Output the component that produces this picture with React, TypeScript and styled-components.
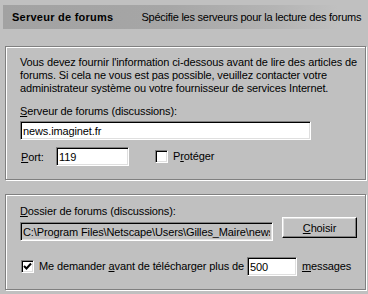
import { createGlobalStyle, styled } from 'styled-components'

const GlobalStyle = createGlobalStyle`
  html, body {
    margin: 0;
    padding: 0;
    background: #c0c0c0;
  }
  body {
    font-family: "Liberation Sans", Arial, sans-serif;
    font-size: 11px;
    letter-spacing: -0.12px;
    color: #000;
  }
`

export default function App() {
  return (
    <Page>
      <GlobalStyle />
      <Header>
        <HeaderTitle>Serveur de forums</HeaderTitle>
        <HeaderText>Spécifie les serveurs pour la lecture des forums</HeaderText>
      </Header>

      <Panel $height={134} $top={17} $padTop={9}>
        <Intro>
          Vous devez fournir l'information ci-dessous avant de lire des articles de
          forums. Si cela ne vous est pas possible, veuillez contacter votre
          administrateur système ou votre fournisseur de services Internet.
        </Intro>
        <FieldLabel $top={10}>
          <u>S</u>erveur de forums (discussions):
        </FieldLabel>
        <TextInput $width={291} defaultValue="news.imaginet.fr" />
        <Row $top={7}>
          <InlineLabel $width={36}>
            <u>P</u>ort:
          </InlineLabel>
          <TextInput $width={73} $top={0} defaultValue="119" />
          <CheckBox $left={26} />
          <CheckText>
            P<u>r</u>otéger
          </CheckText>
        </Row>
      </Panel>

      <Panel $height={96} $top={14} $padTop={10}>
        <FolderRow>
          <FolderField>
            <FieldLabel $top={0}>
              <u>D</u>ossier de forums (discussions):
            </FieldLabel>
            <TextInput
              $width={253}
              $top={4}
              $readOnly
              readOnly
              value="C:\Program Files\Netscape\Users\Gilles_Maire\news"
            />
          </FolderField>
          <Button>
            <u>C</u>hoisir
          </Button>
        </FolderRow>
        <Row $top={16}>
          <CheckBox $left={1}>
            <svg width="9" height="9" viewBox="0 0 9 9">
              <path d="M1 4 L3.5 6.5 L8 1.5" fill="none" stroke="#000" strokeWidth="2" />
            </svg>
          </CheckBox>
          <CheckText>
            Me demander <u>a</u>vant de télécharger plus de
          </CheckText>
          <TextInput $width={50} $top={0} $left={3} defaultValue="500" />
          <CheckText>
            <u>m</u>essages
          </CheckText>
        </Row>
      </Panel>
    </Page>
  )
}

const Page = styled.div`
  width: 368px;
  height: 294px;
  box-sizing: border-box;
  padding: 5px 1px 0 3px;
  overflow: hidden;
`

const Header = styled.div`
  display: flex;
  align-items: center;
  gap: 28px;
  height: 24px;
  padding-left: 9px;
  white-space: nowrap;
  background: linear-gradient(to right, #a2a2a2 0%, #a6a6a6 45%, #b4b4b4 75%, #c0c0c0 92%);
`

const HeaderTitle = styled.span`
  font-weight: 700;
  letter-spacing: 0.25px;
`

const HeaderText = styled.span`
  font-weight: 400;
  letter-spacing: -0.25px;
`

const Panel = styled.div<{ $height: number; $top: number; $padTop: number }>`
  box-sizing: border-box;
  height: ${(p) => p.$height}px;
  margin: ${(p) => p.$top}px 1px 0 2px;
  padding: ${(p) => p.$padTop}px 0 0 14px;
  border: 1px solid #808080;
  box-shadow: inset 1px 1px 0 #fff, 1px 1px 0 #fff;
`

const Intro = styled.p`
  margin: 0;
  line-height: 13px;
  width: 340px;
`

const FieldLabel = styled.div<{ $top: number }>`
  margin-top: ${(p) => p.$top}px;
  line-height: 13px;
`

const TextInput = styled.input<{ $width: number; $top?: number; $left?: number; $readOnly?: boolean }>`
  display: block;
  box-sizing: border-box;
  width: ${(p) => p.$width}px;
  height: 19px;
  margin: ${(p) => p.$top ?? 3}px 0 0 ${(p) => p.$left ?? 0}px;
  padding: 0 2px;
  font: inherit;
  letter-spacing: inherit;
  color: #000;
  background: ${(p) => (p.$readOnly ? '#c0c0c0' : '#fff')};
  border: 1px solid;
  border-color: #808080 #fff #fff #808080;
  box-shadow: inset 1px 1px 0 #000, inset -1px -1px 0 #dfdfdf;
  outline: none;
`

const Row = styled.div<{ $top: number }>`
  display: flex;
  align-items: center;
  margin-top: ${(p) => p.$top}px;
`

const InlineLabel = styled.span<{ $width: number }>`
  width: ${(p) => p.$width}px;
  padding-left: 1px;
  box-sizing: border-box;
`

const CheckBox = styled.span<{ $left: number }>`
  display: flex;
  align-items: center;
  justify-content: center;
  box-sizing: border-box;
  width: 13px;
  height: 13px;
  margin-left: ${(p) => p.$left}px;
  background: #fff;
  border: 1px solid;
  border-color: #808080 #fff #fff #808080;
  box-shadow: inset 1px 1px 0 #000, inset -1px -1px 0 #dfdfdf;
`

const CheckText = styled.span`
  margin-left: 5px;
  line-height: 13px;
`

const FolderRow = styled.div`
  display: flex;
  align-items: flex-end;
`

const FolderField = styled.div`
  display: flex;
  flex-direction: column;
`

const Button = styled.button`
  box-sizing: border-box;
  width: 75px;
  height: 21px;
  margin: 0 0 3px 9px;
  padding: 0;
  font: inherit;
  letter-spacing: inherit;
  color: #000;
  background: #c0c0c0;
  border: 1px solid;
  border-color: #fff #000 #000 #fff;
  box-shadow: inset -1px -1px 0 #808080, inset 1px 1px 0 #dfdfdf;
`
